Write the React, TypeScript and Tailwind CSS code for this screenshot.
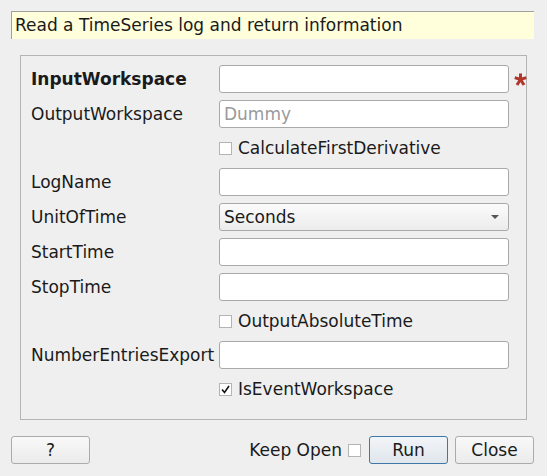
import React from "react";

const font = { fontFamily: '"DejaVu Sans", sans-serif' };

const Star = () => (
  <svg width="13" height="13" viewBox="0 0 14 14" className="block">
    <g stroke="#b3362a" strokeWidth="3.2" strokeLinecap="butt">
      <line x1="7" y1="7" x2="7" y2="0.5" />
      <line x1="7" y1="7" x2="13.2" y2="5" />
      <line x1="7" y1="7" x2="10.8" y2="13" />
      <line x1="7" y1="7" x2="3.2" y2="13" />
      <line x1="7" y1="7" x2="0.8" y2="5" />
    </g>
  </svg>
);

const TextBox = ({ placeholder }: { placeholder?: string }) => (
  <div className="h-[28px] w-[290px] rounded-[3px] border border-[#a9a9a9] bg-white px-[4px] pt-[2px] flex items-center text-[#9a9a9a]">
    {placeholder}
  </div>
);

const Check = ({ checked }: { checked?: boolean }) => (
  <span className="w-[13px] h-[13px] border border-[#b4b4b4] bg-white flex items-center justify-center shrink-0">
    {checked && (
      <svg width="9" height="9" viewBox="0 0 9 9">
        <path d="M1 4.5 L3.5 7.5 L8 1" fill="none" stroke="#111" strokeWidth="1.6" />
      </svg>
    )}
  </span>
);

const Label = ({ children, bold }: { children: React.ReactNode; bold?: boolean }) => (
  <div className={`h-[28px] pt-[2px] flex items-center ${bold ? "font-bold" : ""}`}>{children}</div>
);

const CheckRow = ({ label, checked }: { label: string; checked?: boolean }) => (
  <>
    <div />
    <div className="h-[26px] flex items-center gap-[6px]">
      <Check checked={checked} />
      <span className="pt-[2px]">{label}</span>
    </div>
    <div />
  </>
);

const Button = ({ children, primary }: { children: React.ReactNode; primary?: boolean }) => (
  <button
    className={`h-[28px] w-[79px] rounded-[3px] border pt-[2px] flex items-center justify-center ${
      primary
        ? "border-[#3f78a8] bg-gradient-to-b from-[#f2f5f8] to-[#dfe6ec]"
        : "border-[#ababab] bg-gradient-to-b from-[#f8f8f8] to-[#ebebeb]"
    }`}
  >
    {children}
  </button>
);

export default function App() {
  return (
    <div className="w-[547px] h-[476px] bg-[#efefef] text-[#1a1a1a] text-[17px] overflow-hidden" style={font}>
      <div className="pt-[11px] px-[11px] pr-[13px]">
        <div className="h-[28px] bg-[#ffffdc] border-t border-l border-[#a0a0a0] flex items-center px-[3px]">
          Read a TimeSeries log and return information
        </div>
      </div>
      <div className="mx-[20px] mt-[16px] h-[365px] w-[507px] border border-[#b4b4b4] pt-[9px] pl-[10px]">
        <div className="grid grid-cols-[188px_290px_auto] gap-x-0 gap-y-[7px] items-center">
          <Label bold>InputWorkspace</Label>
          <TextBox />
          <div className="pl-[5px] -mr-[6px]">
            <Star />
          </div>

          <Label>OutputWorkspace</Label>
          <TextBox placeholder="Dummy" />
          <div />

          <CheckRow label="CalculateFirstDerivative" />

          <Label>LogName</Label>
          <TextBox />
          <div />

          <Label>UnitOfTime</Label>
          <div className="h-[28px] w-[290px] rounded-[3px] border border-[#a9a9a9] bg-gradient-to-b from-[#fbfbfb] to-[#ececec] pl-[4px] pr-[9px] flex items-center justify-between">
            <span className="pt-[2px]">Seconds</span>
            <svg width="8" height="4" viewBox="0 0 8 4">
              <path d="M0 0 H8 L4 4 Z" fill="#555" />
            </svg>
          </div>
          <div />

          <Label>StartTime</Label>
          <TextBox />
          <div />

          <Label>StopTime</Label>
          <TextBox />
          <div />

          <CheckRow label="OutputAbsoluteTime" />

          <Label>NumberEntriesExport</Label>
          <TextBox />
          <div />

          <CheckRow label="IsEventWorkspace" checked />
        </div>
      </div>
      <div className="mt-[16px] pl-[11px] pr-[13px] flex items-center">
        <Button>?</Button>
        <div className="flex-1" />
        <span className="mr-[6px] pt-[2px]">Keep Open</span>
        <Check />
        <div className="w-[8px]" />
        <Button primary>Run</Button>
        <div className="w-[7px]" />
        <Button>Close</Button>
      </div>
    </div>
  );
}
